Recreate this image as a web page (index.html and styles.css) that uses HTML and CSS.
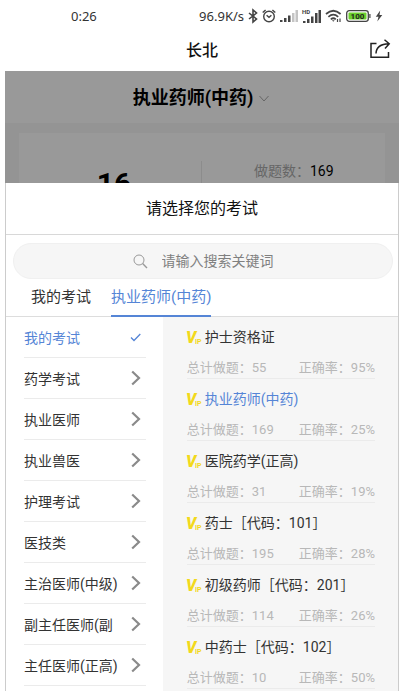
FILE: index.html
```html
<!DOCTYPE html>
<html lang="zh-CN">
<head>
  <meta charset="UTF-8" />
  <meta name="viewport" content="width=device-width, initial-scale=1.0"/>
  <title>长北</title>
  <link rel="stylesheet" href="styles.css">
</head>
<body>

<svg class="defs" aria-hidden="true">
  <symbol id="arrow" viewBox="0 0 10 16">
    <path d="M1.2 1.5 L8 8 L1.2 14.5" fill="none" stroke="#8a8a8a" stroke-width="2.2"/>
  </symbol>
  <symbol id="vip" viewBox="0 0 14 14" overflow="visible">
    <text x="-1" y="13" class="vip-v">V</text>
    <text x="8" y="14" class="vip-ip">IP</text>
  </symbol>
</svg>

<div class="app">
  <div class="status-bar">
    <span>0:26</span>
    <div class="status-right">
      <span>96.9K/s</span>
      <svg width="10" height="14" viewBox="0 0 10 14" fill="none" stroke="#444" stroke-width="1.6">
        <path d="M1 4 L8.5 10 L5 13 V1 L8.5 4 L1 10"/>
      </svg>
      <svg width="14" height="14" viewBox="0 0 14 14" fill="none" stroke="#444" stroke-width="1.4">
        <circle cx="7" cy="7.5" r="5.3"/>
        <path d="M4.6 6.3 L7 8.4 L9.4 6.3 M.7 3.5 L3.6 .9 M13.3 3.5 L10.4 .9"/>
      </svg>
      <svg width="18" height="12" viewBox="0 0 18 12" fill="#444">
        <path d="M0 10h2.500v2H0z M4 8h2.500v4H4z M8 5.500h2.500v6.500H8z"/>
        <path d="M12 3h2.500v9h-2.500z M15.500 0h2.500v12h-2.500z" fill="#c4c4c4"/>
      </svg>
      <svg width="19" height="14" viewBox="0 0 19 14" fill="#444">
        <text x="0" y="5" class="hd">HD</text>
        <path d="M1 12h2.500v2H1z M5 10h2.500v4H5z M9 7.500h2.500v6.500H9z M13 4h2.500v10h-2.500z M16.500 1h2.500v13h-2.500z"/>
      </svg>
      <svg width="17" height="14" viewBox="0 0 17 14" fill="none" stroke="#444" stroke-width="1.7">
        <path d="M1 5 Q8.300 -1.500 15.600 5 M3.400 7.800 Q8.300 3.500 13.200 7.800 M5.800 10.300 Q8.300 8.200 10.800 10.300"/>
        <path d="M7 11.300 L8.300 12.800 L9.600 11.300z" fill="#444" stroke="none"/>
        <path d="M12.500 13V10 M15 9.500V13" stroke-width="1.200"/>
      </svg>
      <svg width="25" height="12" viewBox="0 0 25 12">
        <rect x=".7" y=".7" width="21.600" height="10.600" rx="2.500" fill="#fff" stroke="#444" stroke-width="1.300"/>
        <rect x="2.500" y="2.500" width="18" height="7" rx="1" fill="#6cd02c"/>
        <path d="M23.300 4h1.200v4h-1.200z" fill="#444"/>
        <text x="11.500" y="9" class="level">100</text>
      </svg>
      <svg width="8" height="12" viewBox="0 0 8 12" fill="#444">
        <path d="M5.200 .5 L.8 6.700 H3.500 L2.300 11.500 L7.300 5 H4.500z"/>
      </svg>
    </div>
  </div>

  <header class="nav">
    <h1>长北</h1>
    <button type="button" class="share" aria-label="分享">
      <svg width="22" height="20" viewBox="0 0 22 20" fill="none" stroke="#222" stroke-width="1.500">
        <path d="M7.500 4.500 H2 V18.200 H19.500 V13"/>
        <path d="M7 14.500 C7.200 8.500 11 5 20 4.800 M15.500 .8 L20.200 4.800 L16 9.500"/>
      </svg>
    </button>
  </header>

  <!-- page behind the sheet, dimmed -->
  <section class="dimmed">
    <div class="subject">
      <strong>执业药师(中药)</strong>
      <svg width="10" height="7" viewBox="0 0 10 7" fill="none" stroke="#666">
        <path d="M.5 1 L5 6 L9.500 1"/>
      </svg>
    </div>
    <div class="score-card">
      <div class="score">16</div>
      <div class="count"><span>做题数：</span>169</div>
    </div>
  </section>

  <main class="sheet">
    <h2>请选择您的考试</h2>

    <label class="search">
      <svg width="15" height="15" viewBox="0 0 15 15" fill="none" stroke="#999">
        <circle cx="6" cy="6" r="5"/>
        <path d="M9.600 9.600 L14 14" stroke-width="1.400"/>
      </svg>
      <input type="text" placeholder="请输入搜索关键词" aria-label="搜索">
    </label>

    <nav class="tabs">
      <button type="button">我的考试</button>
      <button type="button" class="active">执业药师(中药)</button>
    </nav>

    <div class="columns">
      <div class="categories">
        <button type="button" class="active">我的考试
          <svg width="11" height="9" viewBox="0 0 11 9" fill="none" stroke="#5585d6" stroke-width="1.300"><path d="M1 4.500 L4 7.500 L10.300 1"/></svg>
        </button>
        <button type="button">药学考试<svg width="10" height="16"><use href="#arrow"/></svg></button>
        <button type="button">执业医师<svg width="10" height="16"><use href="#arrow"/></svg></button>
        <button type="button">执业兽医<svg width="10" height="16"><use href="#arrow"/></svg></button>
        <button type="button">护理考试<svg width="10" height="16"><use href="#arrow"/></svg></button>
        <button type="button">医技类<svg width="10" height="16"><use href="#arrow"/></svg></button>
        <button type="button">主治医师(中级)<svg width="10" height="16"><use href="#arrow"/></svg></button>
        <button type="button">副主任医师(副<svg width="10" height="16"><use href="#arrow"/></svg></button>
        <button type="button">主任医师(正高)<svg width="10" height="16"><use href="#arrow"/></svg></button>
      </div>

      <div class="exams">
        <button type="button" class="exam">
          <span class="name"><svg width="14" height="14"><use href="#vip"/></svg>护士资格证</span>
          <span class="stats"><span>总计做题：55</span><span>正确率：95%</span></span>
        </button>
        <button type="button" class="exam active">
          <span class="name"><svg width="14" height="14"><use href="#vip"/></svg>执业药师(中药)</span>
          <span class="stats"><span>总计做题：169</span><span>正确率：25%</span></span>
        </button>
        <button type="button" class="exam">
          <span class="name"><svg width="14" height="14"><use href="#vip"/></svg>医院药学(正高)</span>
          <span class="stats"><span>总计做题：31</span><span>正确率：19%</span></span>
        </button>
        <button type="button" class="exam">
          <span class="name"><svg width="14" height="14"><use href="#vip"/></svg>药士［代码：101］</span>
          <span class="stats"><span>总计做题：195</span><span>正确率：28%</span></span>
        </button>
        <button type="button" class="exam">
          <span class="name"><svg width="14" height="14"><use href="#vip"/></svg>初级药师［代码：201］</span>
          <span class="stats"><span>总计做题：114</span><span>正确率：26%</span></span>
        </button>
        <button type="button" class="exam">
          <span class="name"><svg width="14" height="14"><use href="#vip"/></svg>中药士［代码：102］</span>
          <span class="stats"><span>总计做题：10</span><span>正确率：50%</span></span>
        </button>
      </div>
    </div>
  </main>
</div>

</body>
</html>
```
FILE: styles.css
```css
* {
  box-sizing: border-box;
}
body {
  margin: 0;
  background: #fff;
  color: #333;
  font-family: Roboto, "Noto Sans CJK SC", sans-serif;
  font-size: 14px;
}
button {
  margin: 0;
  padding: 0;
  border: none;
  background: none;
  color: inherit;
  font: inherit;
  text-align: left;
  cursor: pointer;
}
svg {
  display: block;
  flex: none;
  overflow: visible;
}
.defs {
  display: none;
}
.app {
  display: flex;
  flex-direction: column;
  height: 100vh;
  padding: 0 3px 0 5px;
  overflow: hidden;
}

/* status bar */
.status-bar {
  display: flex;
  flex: none;
  align-items: center;
  justify-content: space-between;
  height: 32px;
  padding: 0 16px 0 66px;
  color: #333;
  font-family: "Noto Sans", sans-serif;
  font-size: 13px;
}
.status-right {
  display: flex;
  align-items: center;
  gap: 4px;
}
.hd {
  font: bold 6px Roboto, sans-serif;
}
.level {
  fill: #222;
  font: bold 8px Roboto, sans-serif;
  text-anchor: middle;
}

/* title bar */
.nav {
  display: grid;
  flex: none;
  grid-template-columns: 1fr auto 1fr;
  align-items: center;
  height: 39px;
  padding: 0 8px 5px;
}
.nav h1 {
  grid-column: 2;
  margin: 0;
  color: #111;
  font-size: 16px;
  font-weight: 500;
}
.share {
  justify-self: end;
}

/* dimmed page */
.dimmed {
  flex: none;
  height: 112px;
  overflow: hidden;
  background: #949494;
}
.subject {
  display: flex;
  align-items: center;
  justify-content: center;
  gap: 6px;
  height: 52px;
  padding-right: 2px;
  padding-bottom: 2px;
  background: #999;
  color: #000;
  font-size: 18px;
}
.subject svg {
  margin-top: 4px;
}
.score-card {
  display: grid;
  grid-template-columns: 1fr 1fr;
  height: 100px;
  margin: 10px 14px 0;
  padding-top: 28px;
  background: #999;
  color: #000;
}
.score {
  padding-left: 8px;
  border-right: 1px solid #8c8c8c;
  font-size: 30px;
  font-weight: bold;
  line-height: 46px;
  text-align: center;
}
.count {
  padding-left: 52px;
  line-height: 20px;
}
.count span {
  color: #666;
}

/* bottom sheet */
.sheet {
  display: flex;
  flex: 1;
  flex-direction: column;
  min-height: 0;
  border: solid #ccc;
  border-width: 0 1px;
}
.sheet h2 {
  margin: 0;
  border-bottom: 1px solid #d8d8d8;
  color: #111;
  font-size: 16px;
  font-weight: normal;
  line-height: 51px;
  text-align: center;
}
.search {
  display: flex;
  flex: none;
  align-items: center;
  justify-content: center;
  gap: 14px;
  height: 36px;
  margin: 8px 5px 0 7px;
  border: 1px solid #f0f0f0;
  border-radius: 18px;
  background: #f6f6f6;
}
.search input {
  width: 112px;
  padding: 0;
  border: none;
  outline: none;
  background: none;
  color: #333;
  font: inherit;
}
.search input::placeholder {
  color: #808080;
}
.tabs {
  display: flex;
  flex: none;
  gap: 20px;
  height: 38px;
  padding-left: 25px;
  border-bottom: 1px solid #ddd;
  font-size: 15px;
}
.tabs button {
  height: 38px;
  padding-bottom: 4px;
  border-bottom: 2px solid transparent;
}
.tabs .active {
  border-color: #5585d6;
}
.active {
  color: #5585d6;
}

.columns {
  display: grid;
  flex: 1;
  grid-template-columns: 2fr 3fr;
  min-height: 0;
  overflow: hidden;
}
.categories {
  padding: 0 17px 0 18px;
}
.categories button {
  display: flex;
  align-items: center;
  justify-content: space-between;
  width: 100%;
  height: 41px;
  padding-right: 5px;
  border-bottom: 1px solid #ebebeb;
  white-space: nowrap;
}
.exams {
  padding: 0 23px 0 24px;
  background: #f6f6f6;
}
.exam {
  display: block;
  width: 100%;
  height: 62px;
  border-bottom: 1px solid #ebebeb;
}
.name {
  display: flex;
  align-items: center;
  gap: 4px;
  line-height: 40px;
}
.stats {
  display: flex;
  justify-content: space-between;
  color: #b8b8b8;
  font-size: 13px;
  line-height: 21px;
  white-space: nowrap;
}
.vip-v {
  fill: #f2d91c;
  font: italic 900 16px Roboto, sans-serif;
}
.vip-ip {
  fill: #f2d91c;
  font: bold 7px Roboto, sans-serif;
}
```
